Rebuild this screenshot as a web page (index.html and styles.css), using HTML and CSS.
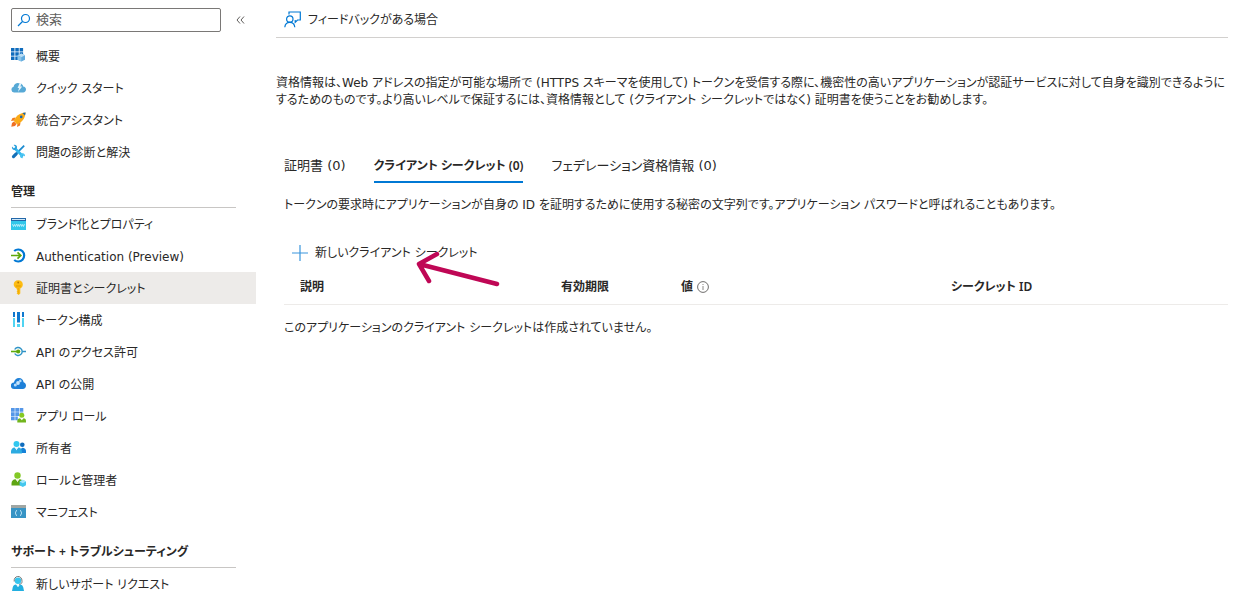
FILE: index.html
```html
<!DOCTYPE html>
<html lang="ja">
<head>
    <meta charset="UTF-8">
    <meta name="viewport" content="width=device-width, initial-scale=1.0">
    <title>証明書とシークレット</title>
    <link rel="stylesheet" href="styles.css">
</head>
<body>

    <div class="page">
        <!-- サイドメニュー -->
        <aside class="sidebar">
            <div class="search-row">
                <div class="search-box">
                    <svg class="search-icon" viewBox="0 0 14 14"><circle cx="8.5" cy="5.5" r="4" fill="none" stroke="#0078d4" stroke-width="1.2"/><path d="M5.5 8.5L1 13" stroke="#0078d4" stroke-width="1.2"/></svg>
                    <input type="text" class="search-input" placeholder="検索" aria-label="検索">
                </div>
                <button type="button" class="collapse-button" aria-label="折りたたむ">
                    <svg width="9" height="8" viewBox="0 0 9 8"><path d="M4 .5L1 4l3 3.500M8 .5L5 4l3 3.500" fill="none" stroke="#605e5c"/></svg>
                </button>
            </div>

            <nav>
                <ul class="menu">
                    <li><a href="#" class="menu-item">
                        <svg class="icon" viewBox="0 0 15 15"><path d="M0 0h3.500v3.500H0zM4.300 0h3.500v3.500H4.300zM8.600 0h3.500v3.500H8.600zM0 4.200h3.500v3.500H0zM4.300 4.200h3.500v3.500H4.300zM8.600 4.200h3.500v3.500H8.600zM0 8.400h3.500v3.500H0zM4.300 8.400h3.500v3.500H4.300z" fill="#0f6cbd"/><path d="M10.300 5.500l3.700 1.800v4.400l-3.700 1.900-3.700-1.900V7.300z" fill="#5ea9dd"/><path d="M10.300 5.500l3.700 1.800-3.700 1.900-3.700-1.900z" fill="#b9dcf4"/><path d="M10.300 9.200v4.400l-3.700-1.900V7.300z" fill="#8cc5ea"/></svg>
                        概要</a></li>
                    <li><a href="#" class="menu-item">
                        <svg class="icon" viewBox="0 0 15 15"><path d="M3 12.500a2.900 2.900 0 0 1-.4-5.700A4.200 4.200 0 0 1 8 3.200c2.400 0 4 1.500 4.200 3.400 1.700.2 2.800 1.400 2.800 2.900s-1.100 3-2.800 3z" fill="#57a9d6"/><path d="M8.700 3h2L9.300 6.500h1.900L7 12l1-4H6.600z" fill="#e4f4fc"/></svg>
                        クイック スタート</a></li>
                    <li><a href="#" class="menu-item">
                        <svg class="icon" viewBox="0 0 15 15"><path d="M4.500 5.500L1.500 6 0 9l3.500-.5zM9.500 10.500L9 13.500 6 15l.5-3.500z" fill="#f07d22"/><path d="M3 9.500l2.500 2.500L4 14 .3 14.700 1 11z" fill="#ef6f22"/><path d="M2.800 9C4.500 4.500 8 1 14.600.4 14 7 10.500 10.500 6 12.200z" fill="#fbab18"/><path d="M11.500 1l3.100-.6L14 3.600z" fill="#1267b4"/><circle cx="10.200" cy="4.900" r="1.300" fill="#1267b4"/></svg>
                        統合アシスタント</a></li>
                    <li><a href="#" class="menu-item">
                        <svg class="icon" viewBox="0 0 15 15"><path d="M13.200 1.700L5 9.900" stroke="#1b8bd0" stroke-width="1.800"/><path d="M5.200 9.900L2.500 12.600" stroke="#1470b8" stroke-width="3.200" stroke-linecap="round"/><path d="M3.500 4l8.500 8.500" stroke="#35b7ee" stroke-width="2.600"/><path d="M1 2.500l2 2 1.500-1.600L2.600 1c2.300-.6 4 1 3.300 3.200L4.500 5.700C2.400 6.600.4 4.800 1 2.500z" fill="#2a9fdc"/><path d="M13.900 12.500l-2-1.900-1.500 1.600 1.900 1.900c-2.300.6-3.800-1-3.300-3.100l1.600-1.600c2-.8 4 .9 3.300 3.100z" fill="#49c5f2"/></svg>
                        問題の診断と解決</a></li>
                </ul>

                <h2 class="menu-heading">管理</h2>
                <ul class="menu">
                    <li><a href="#" class="menu-item">
                        <svg class="icon" viewBox="0 0 15 15"><path d="M0 2h15v12H0z" fill="#32c7ea"/><path d="M0 2h15v3H0z" fill="#2367a9"/><path d="M1 3h13v1H1z" fill="#cfe8f8"/><path d="M1.500 8l1 2.500 1-2 1 2 1-2.500M5.800 8l.9 2.500.9-2 .9 2 .9-2.500M9.800 8l.9 2.500.9-2 .9 2 1-2.500" fill="none" stroke="#e8fbff" stroke-width=".7"/></svg>
                        ブランド化とプロパティ</a></li>
                    <li><a href="#" class="menu-item">
                        <svg class="icon" viewBox="0 0 15 15"><path d="M3.200 3A6 6 0 1 1 3.200 12" fill="none" stroke="#0078d4" stroke-width="2.200"/><path d="M0 7.500h9.500M6.500 4.300l3.300 3.200-3.300 3.200" fill="none" stroke="#5ea80c" stroke-width="1.700"/></svg>
                        Authentication (Preview)</a></li>
                    <li><a href="#" class="menu-item active">
                        <svg class="icon" viewBox="0 0 15 15"><path d="M7.200.3c3 0 4.600 2 4.600 4.200 0 1.900-1 3.200-2.500 3.900v5l-1.700 1.600-2-1.800.9-1-.9-1 .9-1-.9-.9v-.9C3.900 7.700 2.700 6.300 2.700 4.500 2.700 2.200 4.400.3 7.200.3z" fill="#fdbc12"/><circle cx="7.200" cy="2.500" r=".9" fill="#b67800"/><path d="M4.800 5.600h5M4.800 6.700h5M7.300 8v5.500" stroke="#e09a00" stroke-width=".6"/></svg>
                        証明書とシークレット</a></li>
                    <li><a href="#" class="menu-item">
                        <svg class="icon" viewBox="0 0 15 15"><path d="M2 0h2v5H2zM6 0h3v10.500H6zM11 0h2v5h-2z" fill="#0f78cf"/><path d="M2 6h2v9H2zM6 12h3v3H6zM11 6h2v9h-2z" fill="#50d4f2"/></svg>
                        トークン構成</a></li>
                    <li><a href="#" class="menu-item">
                        <svg class="icon" viewBox="0 0 15 15"><path d="M3.700 5.500A4 4 0 1 1 3.700 9.500" fill="none" stroke="#2f93c7" stroke-width="1.400"/><path d="M11 7.500h4" stroke="#2f93c7" stroke-width="1.500"/><path d="M0 7.500h6" stroke="#5ea80c" stroke-width="1.600"/><circle cx="7.200" cy="7.500" r="2.100" fill="#5ea80c"/></svg>
                        API のアクセス許可</a></li>
                    <li><a href="#" class="menu-item">
                        <svg class="icon" viewBox="0 0 15 15"><path d="M3.300 13A3.200 3.200 0 0 1 2.900 6.500C3.400 3.900 5.400 2 8 2c2.500 0 4.300 1.800 4.600 4.200 1.500.3 2.400 1.700 2.400 3.300 0 2-1.400 3.500-3.200 3.500z" fill="#1e80d8"/><circle cx="4.300" cy="9" r="1.500" fill="#b6dcfa"/><circle cx="7" cy="7" r="1.900" fill="#c6e4fc"/><circle cx="9.300" cy="4.900" r="1.300" fill="#b6dcfa"/></svg>
                        API の公開</a></li>
                    <li><a href="#" class="menu-item">
                        <svg class="icon" viewBox="0 0 15 15"><path d="M0 0h3.700v3.700H0zM4.300 0H8v3.700H4.300zM8.600 0h3.700v3.700H8.600zM0 4.300h3.700V8H0zM4.300 4.300H8V8H4.300zM0 8.600h3.700v3.700H0zM4.300 8.600h2.500v3.700H4.300z" fill="#5597e8"/><path d="M8.600 4.300h3.700v3H8.600z" fill="#83b9f5"/><circle cx="10.800" cy="7.300" r="2.500" fill="#86c922"/><path d="M6.300 14.500V13c0-1.700 1.200-2.700 2.700-2.700l1.800 2 1.800-2c1.500 0 2.400 1 2.400 2.700v1.500z" fill="#72b51d"/></svg>
                        アプリ ロール</a></li>
                    <li><a href="#" class="menu-item">
                        <svg class="icon" viewBox="0 0 15 15"><circle cx="11.300" cy="4.800" r="2.300" fill="#0f6cbd"/><path d="M9 13V9.500l2.300-1.800c2.300 0 3.700 1.400 3.700 3.300v2z" fill="#1682d8"/><circle cx="5.500" cy="4" r="3" fill="#32c8ef"/><path d="M0 13.500v-2c0-2.300 1.500-4 3.600-4l1.900 2.300 1.900-2.300c2.100 0 3.500 1.700 3.500 4v2z" fill="#2cabe1"/><path d="M4.300 7.500h2.400l-1.200 3z" fill="#e7f8ff"/></svg>
                        所有者</a></li>
                    <li><a href="#" class="menu-item">
                        <svg class="icon" viewBox="0 0 15 15"><circle cx="6.500" cy="3.500" r="3.200" fill="#83c926"/><path d="M.5 13.500v-2c0-2.500 1.700-4.300 4-4.300l2 2.500 2-2.500c2.300 0 4 1.800 4 4.300v2z" fill="#5fa513"/><path d="M5.300 7.200h2.400l-1.200 3z" fill="#edf9df"/><path d="M11.800 7.800l3.200 1.700v3.700L11.800 15l-3.200-1.800V9.500z" fill="#43c7ee"/><path d="M11.800 7.800l3.200 1.700-3.200 1.800-3.200-1.800z" fill="#a5e8fa"/></svg>
                        ロールと管理者</a></li>
                    <li><a href="#" class="menu-item">
                        <svg class="icon" viewBox="0 0 15 15"><path d="M0 4h15v10H0z" fill="#3794c5"/><path d="M0 1h15v3H0z" fill="#a0a6a3"/><path d="M6 6.300c-1.300 0-.8 2.500-2 2.700 1.200.2.700 2.700 2 2.700M9 6.300c1.300 0 .8 2.500 2 2.700-1.200.2-.7 2.700-2 2.700" fill="none" stroke="#d3effd" stroke-width="1"/></svg>
                        マニフェスト</a></li>
                </ul>

                <h2 class="menu-heading">サポート + トラブルシューティング</h2>
                <ul class="menu">
                    <li><a href="#" class="menu-item">
                        <svg class="icon" viewBox="0 0 15 15"><path d="M3.200 5.500C2.500-1.200 11.500-1.200 11 5.500c0 1.800-1 2.800-3 2.800" fill="none" stroke="#737373" stroke-width="1"/><circle cx="7" cy="4.800" r="3.200" fill="#36c5ee"/><path d="M1 15l.7-3.500C2.200 9.600 3.300 8.500 5 8.500l2 2.500 2-2.500c1.700 0 2.800 1.100 3.300 3L13 15z" fill="#22afe0"/><path d="M5.800 8.500h2.400L7 11z" fill="#e7f8ff"/></svg>
                        新しいサポート リクエスト</a></li>
                </ul>
            </nav>
        </aside>

        <!-- メイン領域 -->
        <main class="content">
            <div class="toolbar">
                <button type="button" class="command">
                    <svg width="17" height="17" viewBox="0 0 17 17" fill="none" stroke="#0078d4" stroke-width="1.200"><path d="M5 3.500V1h11.300v8h-2.800l-2.300 2.300V9"/><circle cx="5.800" cy="8" r="3.200"/><path d="M.8 16.300c.3-3.200 2.200-5 5-5s4.700 1.800 5 5"/></svg>
                    フィードバックがある場合
                </button>
            </div>

            <p class="intro">資格情報は、Web アドレスの指定が可能な場所で (HTTPS スキーマを使用して) トークンを受信する際に、機密性の高いアプリケーションが認証サービスに対して自身を識別できるようにするためのものです。より高いレベルで保証するには、資格情報として (クライアント シークレットではなく) 証明書を使うことをお勧めします。</p>

            <div class="tabs" role="tablist">
                <button type="button" class="tab" role="tab">証明書 (0)</button>
                <button type="button" class="tab selected" role="tab" aria-selected="true">クライアント シークレット (0)</button>
                <button type="button" class="tab" role="tab">フェデレーション資格情報 (0)</button>
            </div>

            <section class="panel">
                <p class="description">トークンの要求時にアプリケーションが自身の ID を証明するために使用する秘密の文字列です。アプリケーション パスワードと呼ばれることもあります。</p>

                <div class="add-row">
                    <button type="button" class="command">
                        <svg width="16" height="16" viewBox="0 0 16 16"><path d="M8 0v16M0 8h16" stroke="#3a96dd" stroke-width="1.200"/></svg>
                        新しいクライアント シークレット
                    </button>
                    <!-- ボタンを指す矢印 -->
                    <svg class="arrow" width="86" height="36" viewBox="0 0 86 36"><path d="M83 33L5 13M23 3L5 13l10 17" fill="none" stroke="#bf0755" stroke-width="4.500" stroke-linecap="round" stroke-linejoin="round"/></svg>
                </div>

                <table class="secrets">
                    <thead>
                        <tr>
                            <th class="col-name">説明</th>
                            <th class="col-expires">有効期限</th>
                            <th class="col-value"><span class="with-info">値
                                <svg width="12" height="12" viewBox="0 0 12 12"><circle cx="6" cy="6" r="5.400" fill="none" stroke="#605e5c" stroke-width=".9"/><path d="M6 5v4M6 3v1" stroke="#8a8886"/></svg></span></th>
                            <th>シークレット ID</th>
                        </tr>
                    </thead>
                    <tbody>
                        <tr>
                            <td colspan="4">このアプリケーションのクライアント シークレットは作成されていません。</td>
                        </tr>
                    </tbody>
                </table>
            </section>
        </main>
    </div>

</body>
</html>
```

FILE: styles.css
```css
* {
    box-sizing: border-box;
}

body {
    margin: 0;
    background-color: #fff;
    color: #292827;
    font-family: "DejaVu Sans", "Noto Sans CJK JP", sans-serif;
    font-size: 12px;
    line-height: 18px;
    font-feature-settings: "palt"; /* かなを詰めて表示 */
}

button,
input {
    font: inherit;
    color: inherit;
    font-feature-settings: inherit;
}

button {
    padding: 0;
    border: none;
    background: none;
    cursor: pointer;
}

.page {
    display: flex;
}

/* サイドメニュー */
.sidebar {
    flex: 0 0 256px;
}

.search-row {
    display: flex;
    align-items: center;
    height: 40px;
    padding-left: 11px;
    gap: 15px;
}

.search-box {
    display: flex;
    align-items: center;
    width: 210px;
    height: 24px;
    padding: 0 5px;
    gap: 5px;
    border: 1px solid #7a7876;
    border-radius: 2px;
}

.search-icon {
    flex: none;
    width: 14px;
    height: 14px;
}

.search-input {
    flex: 1;
    min-width: 0;
    padding: 0;
    border: none;
    outline: none;
    font-size: 13px;
}

.search-input::placeholder {
    color: #605e5c;
    opacity: 1;
}

.collapse-button {
    display: flex;
}

.menu {
    margin: 0;
    padding: 0;
    list-style: none;
}

.menu-item {
    display: flex;
    align-items: center;
    height: 32px;
    padding: 2px 0 0 11px;
    gap: 10px;
    color: inherit;
    text-decoration: none;
}

.menu-item.active {
    background-color: #edebe9;
}

.icon {
    flex: none;
    width: 15px;
    height: 15px;
    margin-bottom: 3px;
}

.menu-heading {
    height: 40px;
    margin: 0 20px 0 11px;
    padding-top: 15px;
    border-bottom: 1px solid #c8c6c4;
    font-family: "Noto Sans", "Noto Sans CJK JP", sans-serif;
    font-size: 12px;
    font-weight: 600;
}

/* メイン領域 */
.content {
    flex: 1;
    min-width: 0;
    padding: 0 5px 0 20px;
}

.toolbar {
    display: flex;
    height: 38px;
    padding: 2px 0 0 8px;
    border-bottom: 1px solid #d2d0ce;
}

.command {
    display: flex;
    align-items: center;
    gap: 7px;
}

.intro {
    margin: 37px 0 0;
    line-height: 17px;
}

.tabs {
    display: flex;
    gap: 28px;
    margin-top: 40px;
    padding-left: 8px;
}

.tab {
    height: 34px;
    padding-top: 2px;
    border-bottom: 2px solid transparent;
    font-size: 13px;
}

.tab.selected {
    border-bottom-color: #0078d4;
    font-family: "Noto Sans", "Noto Sans CJK JP", sans-serif;
    font-size: 12px;
    font-weight: 600;
}

.panel {
    padding-left: 8px;
}

.description {
    margin: 13px 0 0;
}

.add-row {
    position: relative;
    display: flex;
    height: 32px;
    margin-top: 22px;
    padding: 1px 0 0 8px;
}

.arrow {
    position: absolute;
    left: 130px;
    top: 15px;
    pointer-events: none;
}

.secrets {
    width: 100%;
    table-layout: fixed;
    border-collapse: collapse;
    text-align: left;
}

.secrets th {
    height: 36px;
    padding: 2px 0 0;
    border-bottom: 1px solid #edebe9;
    font-family: "Noto Sans", "Noto Sans CJK JP", sans-serif;
    font-size: 12px;
    font-weight: 600;
}

.secrets td {
    height: 46px;
    padding: 2px 0 0;
}

.secrets .col-name {
    width: 277px;
    padding-left: 16px;
}

.col-expires {
    width: 120px;
}

.col-value {
    width: 270px;
}

.with-info {
    display: flex;
    align-items: center;
    gap: 4px;
}
```
